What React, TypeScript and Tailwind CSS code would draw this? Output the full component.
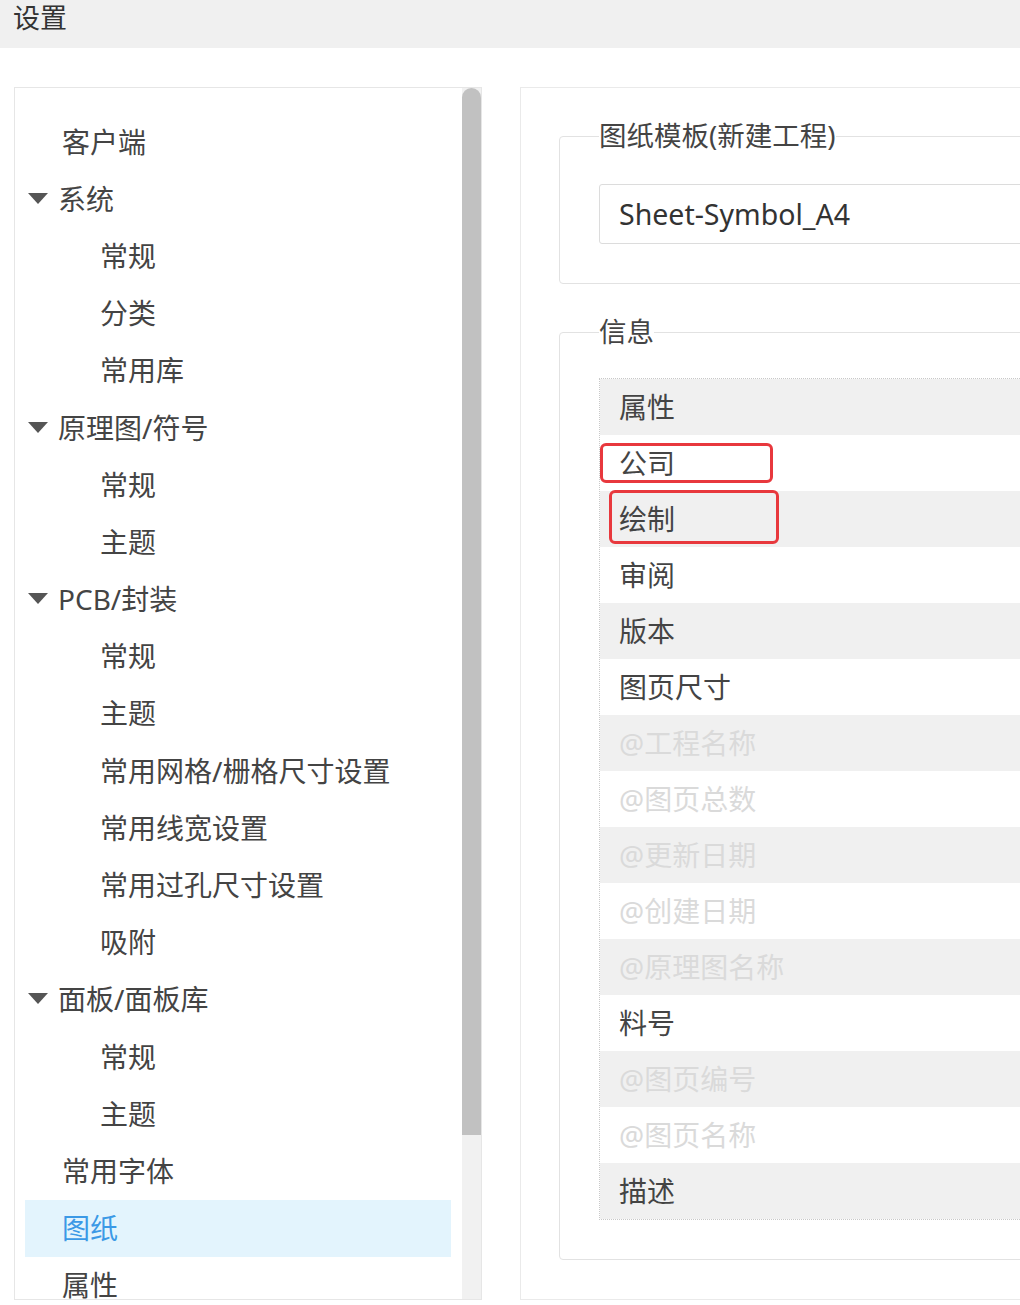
import React from 'react';

type TreeItem = { label: string; level: 0 | 1 | 2; group?: boolean; active?: boolean };

const tree: TreeItem[] = [
  { label: '客户端', level: 0 },
  { label: '系统', level: 0, group: true },
  { label: '常规', level: 1 },
  { label: '分类', level: 1 },
  { label: '常用库', level: 1 },
  { label: '原理图/符号', level: 0, group: true },
  { label: '常规', level: 1 },
  { label: '主题', level: 1 },
  { label: 'PCB/封装', level: 0, group: true },
  { label: '常规', level: 1 },
  { label: '主题', level: 1 },
  { label: '常用网格/栅格尺寸设置', level: 1 },
  { label: '常用线宽设置', level: 1 },
  { label: '常用过孔尺寸设置', level: 1 },
  { label: '吸附', level: 1 },
  { label: '面板/面板库', level: 0, group: true },
  { label: '常规', level: 1 },
  { label: '主题', level: 1 },
  { label: '常用字体', level: 0 },
  { label: '图纸', level: 0, active: true },
  { label: '属性', level: 0 },
];

// muted = placeholder rows shown in light grey
const rows: { label: string; muted?: boolean; mark?: 'a' | 'b' }[] = [
  { label: '属性' },
  { label: '公司', mark: 'a' },
  { label: '绘制', mark: 'b' },
  { label: '审阅' },
  { label: '版本' },
  { label: '图页尺寸' },
  { label: '@工程名称', muted: true },
  { label: '@图页总数', muted: true },
  { label: '@更新日期', muted: true },
  { label: '@创建日期', muted: true },
  { label: '@原理图名称', muted: true },
  { label: '料号' },
  { label: '@图页编号', muted: true },
  { label: '@图页名称', muted: true },
  { label: '描述' },
];

const font = "font-['Noto_Sans','Noto_Sans_CJK_SC',sans-serif]";

const Caret = () => (
  <svg width="20" height="12" viewBox="0 0 20 12" className="shrink-0">
    <path d="M0 0 H20 L10 11 Z" fill="#555" />
  </svg>
);

export default function App() {
  return (
    <div className={`w-[1020px] h-[1305px] overflow-hidden bg-white text-[#333] ${font}`}>
      <div className="h-12 bg-[#f0f0f0] pl-[13px] text-[27px] leading-[36px]">设置</div>

      <div className="flex gap-[38px] pl-[14px] pt-[39px]">
        {/* left tree */}
        <div className="w-[468px] h-[1213px] shrink-0 border border-[#e6e6e6] flex overflow-hidden">
          <div className="flex-1 pl-[10px] pr-[11px] pt-[25px] overflow-hidden">
            {tree.map((item, i) => (
              <div
                key={i}
                className={`h-[57.2px] flex items-center text-[28px] whitespace-nowrap ${
                  item.active ? 'bg-[#e3f4fd] text-[#3b99e6]' : 'text-[#444]'
                } ${item.group ? 'pl-[3px] gap-[10px]' : item.level === 1 ? 'pl-[75px]' : 'pl-[37px]'}`}
              >
                {item.group && <Caret />}
                <span>{item.label}</span>
              </div>
            ))}
          </div>
          <div className="w-[19px] bg-[#f1f1f1] flex flex-col">
            <div className="h-[1047px] bg-[#c1c1c1] rounded-t-full rounded-b-[6px]" />
          </div>
        </div>

        {/* right content */}
        <div className="w-[600px] h-[1213px] shrink-0 border border-[#eaeaea] pl-[38px] pt-[30px]">
          <fieldset className="border border-[#e2e2e2] rounded-[4px] pl-[39px] pb-[39px] w-[600px]">
            <legend className="text-[27.5px] leading-[36px] text-[#444]">图纸模板(新建工程)</legend>
            <div className="mt-[30px] h-[60px] border border-[#dcdcdc] rounded-[3px] flex items-center pl-[19px] text-[28.5px] text-[#333]">
              Sheet-Symbol_A4
            </div>
          </fieldset>

          <fieldset className="mt-[30px] border border-[#e2e2e2] rounded-[4px] pl-[39px] pb-[39px] w-[600px]">
            <legend className="text-[27.5px] leading-[36px] text-[#444]">信息</legend>
            <div className="mt-[28px] border border-dotted border-[#c8c8c8]">
              {rows.map((r, i) => (
                <div
                  key={i}
                  className={`relative h-[56px] flex items-center pl-[19px] text-[28px] ${
                    i % 2 === 0 ? 'bg-[#f0f0f0]' : 'bg-white'
                  } ${r.muted ? 'text-[#dadada]' : 'text-[#444]'}`}
                >
                  {r.label}
                  {r.mark === 'a' && (
                    <div className="absolute left-0 top-[8px] w-[173px] h-[40px] border-[3px] border-[#e8383d] rounded-[6px]" />
                  )}
                  {r.mark === 'b' && (
                    <div className="absolute left-[9px] top-[-1px] w-[170px] h-[54px] border-[3px] border-[#e8383d] rounded-[6px]" />
                  )}
                </div>
              ))}
            </div>
          </fieldset>
        </div>
      </div>
    </div>
  );
}
